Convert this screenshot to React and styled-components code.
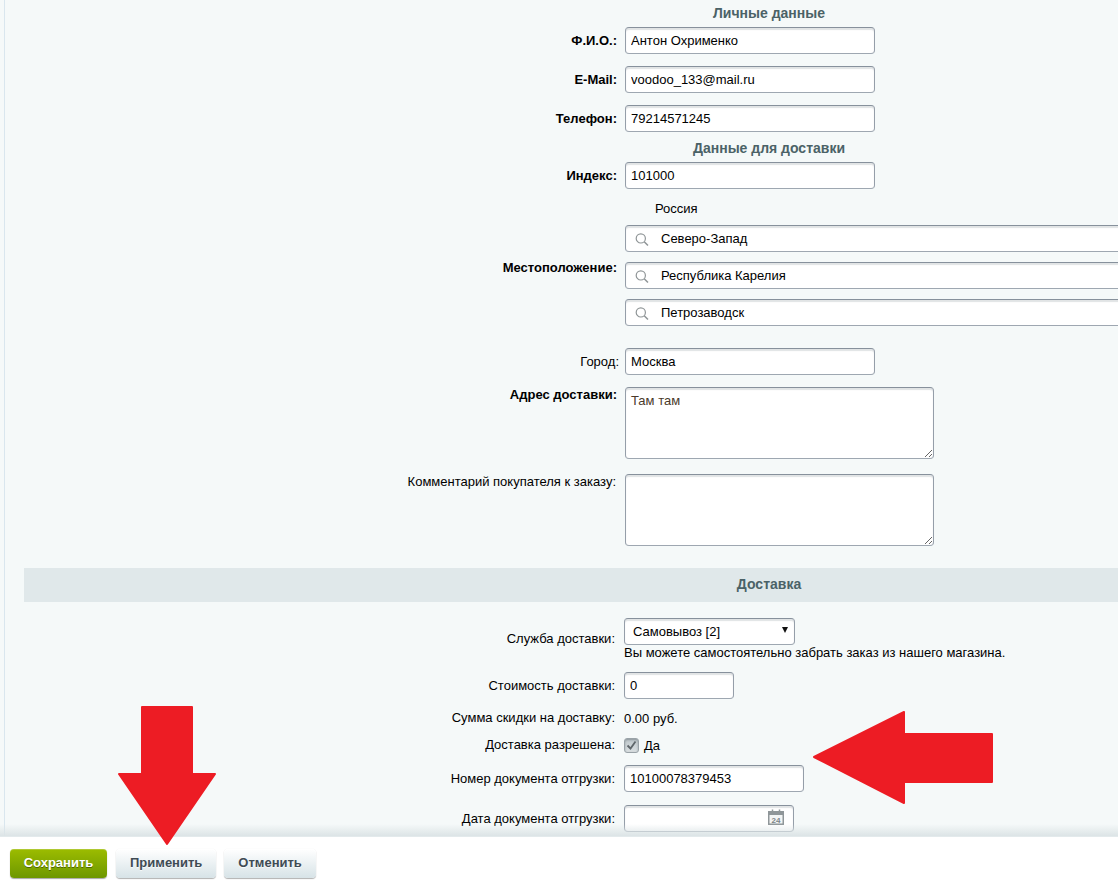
import styled, { createGlobalStyle } from "styled-components";

const GlobalStyle = createGlobalStyle`
  html, body {
    margin: 0;
    padding: 0;
    background: #f5f9f9;
  }
  body {
    font-family: "Liberation Sans", Arial, sans-serif;
    font-size: 13px;
    color: #000;
  }
`;

const Page = styled.div`
  position: relative;
  display: flex;
  flex-direction: column;
  width: 1118px;
  height: 885px;
  overflow: hidden;
`;

const Content = styled.div`
  flex: 1;
  min-height: 0;
  overflow: hidden;
  margin-left: 4px;
  padding-left: 19px;
  border-left: 1px solid #d9e6ee;
`;

const Form = styled.div`
  width: 1490px;
`;

const Heading = styled.div`
  padding: ${(p) => p.$top}px 0 6px;
  text-align: center;
  font-size: 14px;
  line-height: 16px;
  font-weight: bold;
  color: #4b6267;
`;

const Row = styled.div`
  display: grid;
  grid-template-columns: 40% 60%;
  align-items: ${(p) => (p.$top ? "start" : "center")};
  margin-top: ${(p) => p.$mt || 0}px;
`;

const Label = styled.div`
  text-align: right;
  line-height: 16px;
  font-weight: ${(p) => (p.$bold ? "bold" : "normal")};
  padding-right: ${(p) => p.$pr ?? 3}px;
`;

const Value = styled.div`
  display: flex;
  flex-direction: column;
  align-items: flex-start;
  padding-left: ${(p) => p.$pl ?? 5}px;
  padding-bottom: ${(p) => p.$pb || 0}px;
  line-height: 15px;
`;

const TextInput = styled.input`
  box-sizing: border-box;
  width: ${(p) => p.$w || 250}px;
  height: 27px;
  padding: 0 5px;
  background: #fff;
  border: 1px solid;
  border-color: #87919c #959ea9 #9ea7b1 #959ea9;
  border-radius: 4px;
  box-shadow: inset 0 2px 1px rgba(180, 188, 191, 0.4);
  font: 13px "Liberation Sans", Arial, sans-serif;
  color: #000;
  outline: none;
`;

const TextArea = styled.textarea`
  display: block;
  box-sizing: border-box;
  width: 309px;
  height: 72px;
  padding: 5px;
  background: #fff;
  border: 1px solid;
  border-color: #87919c #959ea9 #9ea7b1 #959ea9;
  border-radius: 4px;
  box-shadow: inset 0 2px 1px rgba(180, 188, 191, 0.4);
  font: 13px "Liberation Sans", Arial, sans-serif;
  color: #4a3a2a;
  outline: none;
`;

const Country = styled.div`
  padding: 1px 0 0 30px;
  line-height: 18px;
  margin-bottom: 7px;
`;

const SearchBox = styled.div`
  position: relative;
  margin-top: ${(p) => p.$mt || 0}px;
`;

const SearchIcon = styled.svg`
  position: absolute;
  left: 10px;
  top: 6px;
  width: 16px;
  height: 16px;
`;

const SearchInput = styled(TextInput)`
  padding-left: 35px;
`;

const SelectBox = styled.div`
  position: relative;
  width: 171px;
  &::after {
    content: "";
    position: absolute;
    right: 7px;
    top: 9px;
    border-left: 3px solid transparent;
    border-right: 3px solid transparent;
    border-top: 6px solid #111;
    pointer-events: none;
  }
`;

const Select = styled.select`
  box-sizing: border-box;
  display: block;
  width: 100%;
  height: 27px;
  padding: 0 8px;
  appearance: none;
  background: #fff;
  border: 1px solid;
  border-color: #87919c #959ea9 #9ea7b1 #959ea9;
  border-radius: 4px;
  box-shadow: inset 0 2px 1px rgba(180, 188, 191, 0.4);
  font: 13px "Liberation Sans", Arial, sans-serif;
  color: #000;
  outline: none;
`;

const SectionBar = styled.div`
  margin-top: 22px;
  height: 34px;
  line-height: 32px;
  background: #e0e8ea;
  text-align: center;
  font-size: 14px;
  font-weight: bold;
  color: #4b6267;
`;

const CheckLine = styled.div`
  display: flex;
  align-items: center;
  gap: 5px;
`;

const CheckBox = styled.span`
  display: flex;
  align-items: center;
  justify-content: center;
  box-sizing: border-box;
  width: 15px;
  height: 15px;
  background: linear-gradient(#bfc8cc, #d9dfe1);
  border: 1px solid #9aa3a8;
  border-radius: 3px;
  box-shadow: inset 0 1px 2px rgba(90, 100, 105, 0.5);
`;

const DateBox = styled.div`
  position: relative;
`;

const CalendarIcon = styled.svg`
  position: absolute;
  right: 10px;
  top: 4px;
  width: 16px;
  height: 16px;
`;

const Footer = styled.div`
  position: relative;
  display: flex;
  gap: 8px;
  flex: none;
  height: 49px;
  box-sizing: border-box;
  padding: 12px 0 0 10px;
  background: #fff;
  border-top: 1px solid #e3eaec;
  &::before {
    content: "";
    position: absolute;
    left: 0;
    right: 0;
    top: -13px;
    height: 12px;
    background: linear-gradient(rgba(220, 228, 230, 0), #dce4e6);
    pointer-events: none;
  }
`;

const Button = styled.button`
  height: 29px;
  padding: 0 14px 2px;
  border: none;
  border-radius: 4px;
  font: bold 13px "Liberation Sans", Arial, sans-serif;
  color: #3f4b54;
  background: linear-gradient(#fff, #d7e3e7);
  text-shadow: 0 1px rgba(255, 255, 255, 0.7);
  box-shadow: 0 0 1px rgba(0, 0, 0, 0.11), 0 1px 1px rgba(0, 0, 0, 0.3), inset 0 1px #fff;
`;

const SaveButton = styled(Button)`
  width: 97px;
  margin-right: 1px;
  padding: 0 0 2px;
  color: #fff;
  background: linear-gradient(#9cbc00, #6d9700);
  text-shadow: 0 1px rgba(0, 0, 0, 0.4);
  box-shadow: 0 1px 1px rgba(0, 0, 0, 0.35), inset 0 1px rgba(255, 255, 255, 0.2);
`;

const Arrow = styled.svg`
  position: absolute;
  left: ${(p) => p.$x}px;
  top: ${(p) => p.$y}px;
  width: ${(p) => p.$w}px;
  height: ${(p) => p.$h}px;
  fill: #ed1c24;
  stroke: #ed1c24;
  stroke-width: 2;
  stroke-linejoin: round;
`;

const SearchField = ({ value, mt }) => (
  <SearchBox $mt={mt}>
    <SearchInput $w={800} value={value} readOnly />
    <SearchIcon viewBox="0 0 16 16" fill="none" stroke="#8f9597" strokeWidth="1.2">
      <circle cx="5.8" cy="7.4" r="4.6" />
      <path d="M9.2 10.8l3.8 3.7" strokeWidth="1.5" />
    </SearchIcon>
  </SearchBox>
);

const App = () => (
  <Page>
    <GlobalStyle />
    <Content>
      <Form>
        <Heading $top={5}>Личные данные</Heading>
        <Row>
          <Label $bold>Ф.И.О.:</Label>
          <Value>
            <TextInput value="Антон Охрименко" readOnly />
          </Value>
        </Row>
        <Row $mt={12}>
          <Label $bold>E-Mail:</Label>
          <Value>
            <TextInput value="voodoo_133@mail.ru" readOnly />
          </Value>
        </Row>
        <Row $mt={12}>
          <Label $bold>Телефон:</Label>
          <Value>
            <TextInput value="79214571245" readOnly />
          </Value>
        </Row>
        <Heading $top={8}>Данные для доставки</Heading>
        <Row>
          <Label $bold>Индекс:</Label>
          <Value>
            <TextInput value="101000" readOnly />
          </Value>
        </Row>
        <Row $mt={10}>
          <Label $bold>Местоположение:</Label>
          <Value $pb={11}>
            <Country>Россия</Country>
            <SearchField value="Северо-Запад" />
            <SearchField value="Республика Карелия" mt={10} />
            <SearchField value="Петрозаводск" mt={10} />
          </Value>
        </Row>
        <Row $mt={11}>
          <Label $pr={1}>Город:</Label>
          <Value>
            <TextInput value="Москва" readOnly />
          </Value>
        </Row>
        <Row $mt={12} $top>
          <Label $bold>Адрес доставки:</Label>
          <Value>
            <TextArea value="Там там" readOnly />
          </Value>
        </Row>
        <Row $mt={15} $top>
          <Label $pr={4}>Комментарий покупателя к заказу:</Label>
          <Value>
            <TextArea value="" readOnly />
          </Value>
        </Row>
        <SectionBar>Доставка</SectionBar>
        <Row $mt={16}>
          <Label $pr={5}>Служба доставки:</Label>
          <Value $pl={4}>
            <SelectBox>
              <Select defaultValue="2">
                <option value="2">Самовывоз [2]</option>
              </Select>
            </SelectBox>
            <span>Вы можете самостоятельно забрать заказ из нашего магазина.</span>
          </Value>
        </Row>
        <Row $mt={12}>
          <Label $pr={5}>Стоимость доставки:</Label>
          <Value $pl={4}>
            <TextInput $w={110} value="0" readOnly />
          </Value>
        </Row>
        <Row $mt={11}>
          <Label $pr={5}>Сумма скидки на доставку:</Label>
          <Value $pl={4}>0.00 руб.</Value>
        </Row>
        <Row $mt={11}>
          <Label $pr={5}>Доставка разрешена:</Label>
          <Value $pl={4}>
            <CheckLine>
              <CheckBox>
                <svg width="11" height="11" viewBox="0 0 11 11" fill="none" stroke="#5f676b" strokeWidth="1.8">
                  <path d="M1.5 5.5l3 3 5-7" />
                </svg>
              </CheckBox>
              Да
            </CheckLine>
          </Value>
        </Row>
        <Row $mt={12}>
          <Label $pr={5}>Номер документа отгрузки:</Label>
          <Value $pl={4}>
            <TextInput $w={180} value="10100078379453" readOnly />
          </Value>
        </Row>
        <Row $mt={13}>
          <Label $pr={5}>Дата документа отгрузки:</Label>
          <Value $pl={4}>
            <DateBox>
              <TextInput $w={170} value="" readOnly />
              <CalendarIcon viewBox="0 0 16 16">
                <rect x="0.75" y="2.75" width="14.5" height="12.5" fill="#f3f5f5" stroke="#8f9699" strokeWidth="1.5" />
                <rect x="0" y="2" width="16" height="4" fill="#8f9699" />
                <path d="M4.5 0.5v3M11.5 0.5v3" stroke="#8f9699" strokeWidth="1.5" />
                <text x="8" y="13.5" textAnchor="middle" fontSize="8" fontWeight="bold" fontFamily="Liberation Sans, sans-serif" fill="#7d8588">
                  24
                </text>
              </CalendarIcon>
            </DateBox>
          </Value>
        </Row>
      </Form>
    </Content>
    <Footer>
      <SaveButton>Сохранить</SaveButton>
      <Button>Применить</Button>
      <Button>Отменить</Button>
    </Footer>
    <Arrow $x={118} $y={706} $w={98} $h={140} viewBox="0 0 98 140">
      <path d="M24 1h50v67h23L49 138 1 68h23z" />
    </Arrow>
    <Arrow $x={813} $y={711} $w={180} $h={93} viewBox="0 0 180 93">
      <path d="M1 46L91 1v22h88v48H91v21z" />
    </Arrow>
  </Page>
);

export default App;
